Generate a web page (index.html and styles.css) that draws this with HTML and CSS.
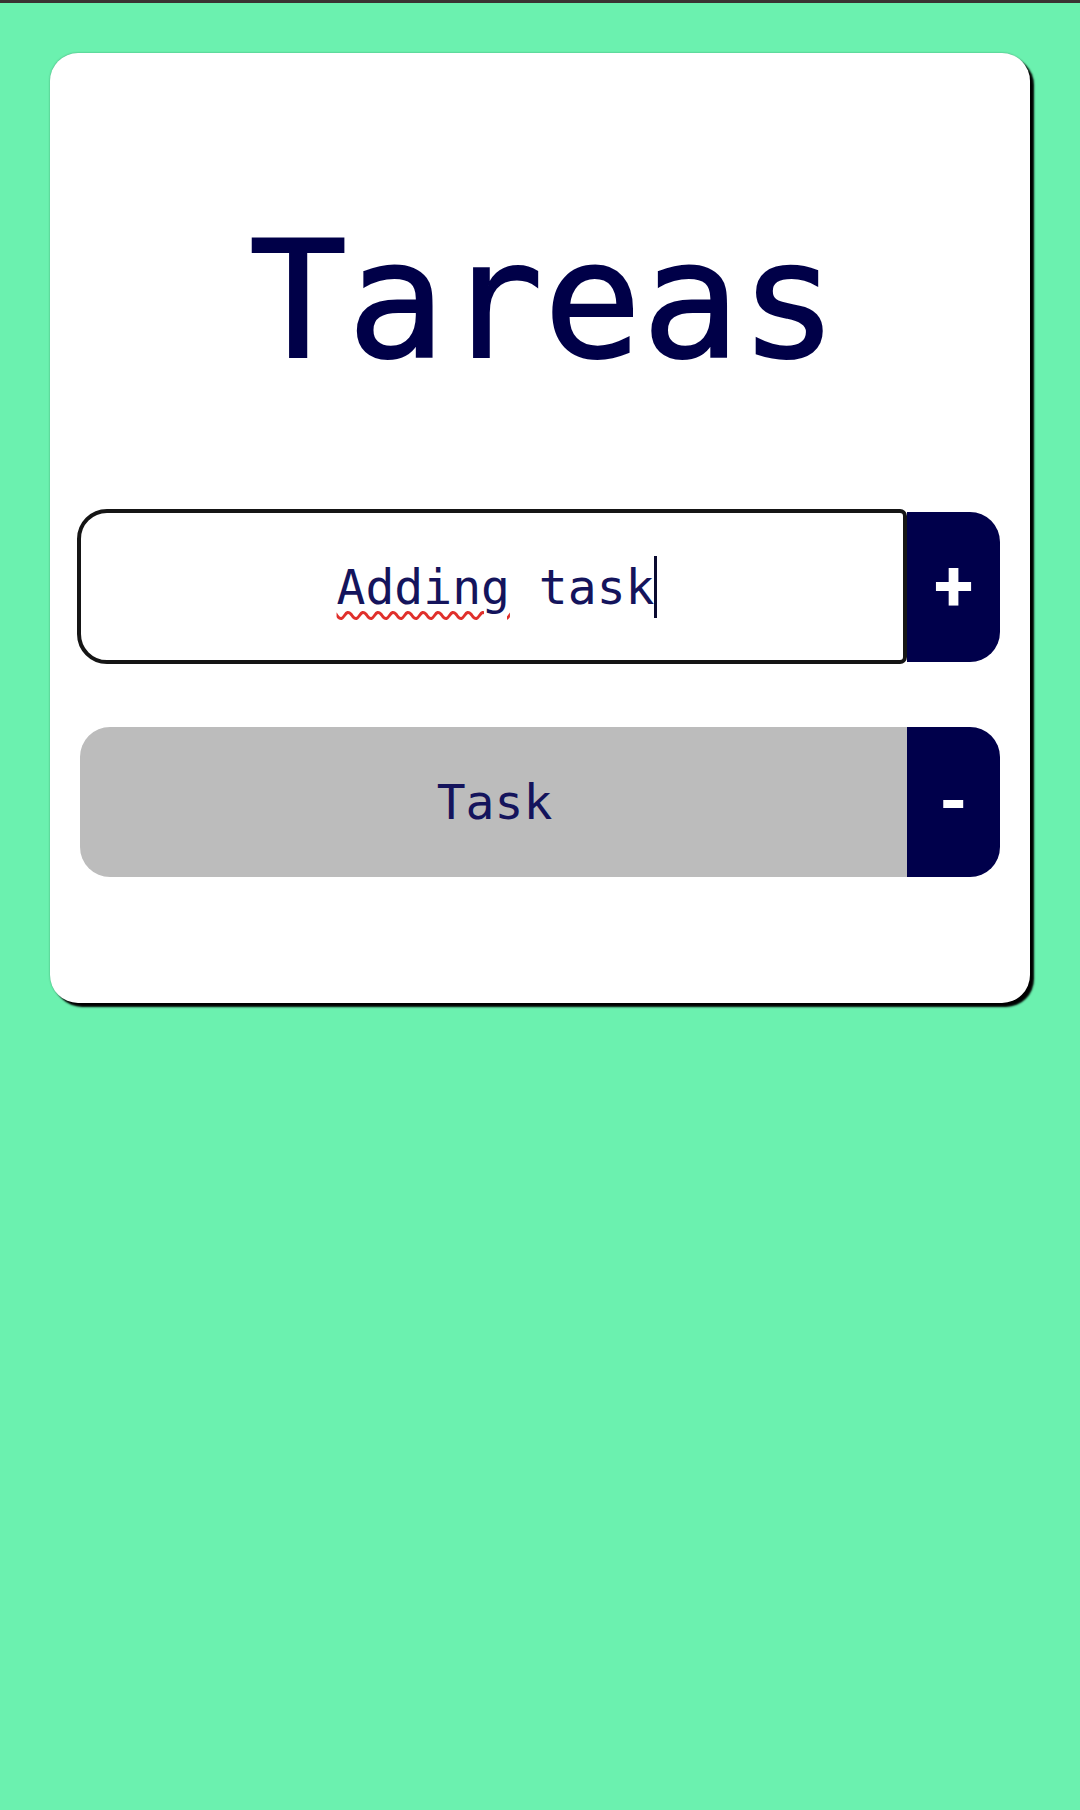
FILE: index.html
```html
<!DOCTYPE html>
<html lang="es">
<head>
<meta charset="utf-8">
<title>Tareas</title>
<link rel="stylesheet" href="styles.css">
</head>
<body>
<div class="status-strip"></div>
<main class="page">
  <section class="card">
    <h1 class="title">Tareas</h1>
    <div class="add-row">
      <div class="field" role="textbox" aria-label="Nueva tarea">
        <span class="field-text"><span class="misspelled">Adding</span> task</span><span class="caret"></span>
      </div>
      <button class="row-btn" type="button" aria-label="Añadir">+</button>
    </div>
    <ul class="task-list">
      <li class="task-row">
        <span class="task-text">Task</span>
        <button class="row-btn row-btn--minus" type="button" aria-label="Eliminar">-</button>
      </li>
    </ul>
  </section>
</main>
</body>
</html>
```

FILE: styles.css
```css
html, body {
  margin: 0;
  padding: 0;
}

body {
  background: #6bf1af;
  min-height: 1810px;
  font-family: "DejaVu Sans Mono", monospace;
}

.status-strip {
  height: 3px;
  background: #3a3333;
}

.page {
  padding: 50px 50px 0 50px;
}

.card {
  width: 980px;
  height: 950px;
  box-sizing: border-box;
  background: #ffffff;
  border-radius: 28px;
  box-shadow: 4px 4px 2px #000000, 0 0 2px rgba(0, 60, 30, 0.45);
  padding: 166px 30px 0 27px;
}

.title {
  margin: 0;
  font-family: "DejaVu Sans Mono", monospace;
  font-weight: 400;
  font-size: 163px;
  line-height: 163px;
  height: 163px;
  text-align: center;
  color: #000048;
  -webkit-text-stroke: 2px #000048;
  padding-left: 10px;
}

.add-row {
  margin-top: 127px;
  display: flex;
  align-items: center;
  height: 155px;
}

.field {
  flex: 1;
  height: 155px;
  box-sizing: border-box;
  border: 4px solid #151515;
  border-radius: 30px 7px 7px 30px;
  display: flex;
  align-items: center;
  justify-content: center;
  padding-left: 10px;
  font-size: 48px;
  color: #14145c;
}

.field-text {
  white-space: pre;
}

.misspelled {
  text-decoration: underline wavy #e0302c;
  text-decoration-thickness: 2.5px;
  text-underline-offset: 7px;
}

.caret {
  width: 3px;
  height: 62px;
  background: #0a0a30;
}

.row-btn {
  width: 93px;
  height: 150px;
  border: 0;
  margin: 0;
  padding: 0;
  background: #00004b;
  color: #ffffff;
  border-radius: 0 30px 30px 0;
  font-family: Roboto, "Liberation Sans", sans-serif;
  font-weight: 700;
  font-size: 72px;
  line-height: 1;
  display: flex;
  align-items: center;
  justify-content: center;
}

.task-list {
  list-style: none;
  margin: 63px 0 0 0;
  padding: 0;
}

.task-row {
  display: flex;
  height: 150px;
  margin-left: 3px;
}

.task-text {
  flex: 1;
  background: #bcbcbc;
  border-radius: 30px 0 0 30px;
  display: flex;
  align-items: center;
  justify-content: center;
  padding-left: 2px;
  font-size: 48px;
  color: #14145c;
}
```
